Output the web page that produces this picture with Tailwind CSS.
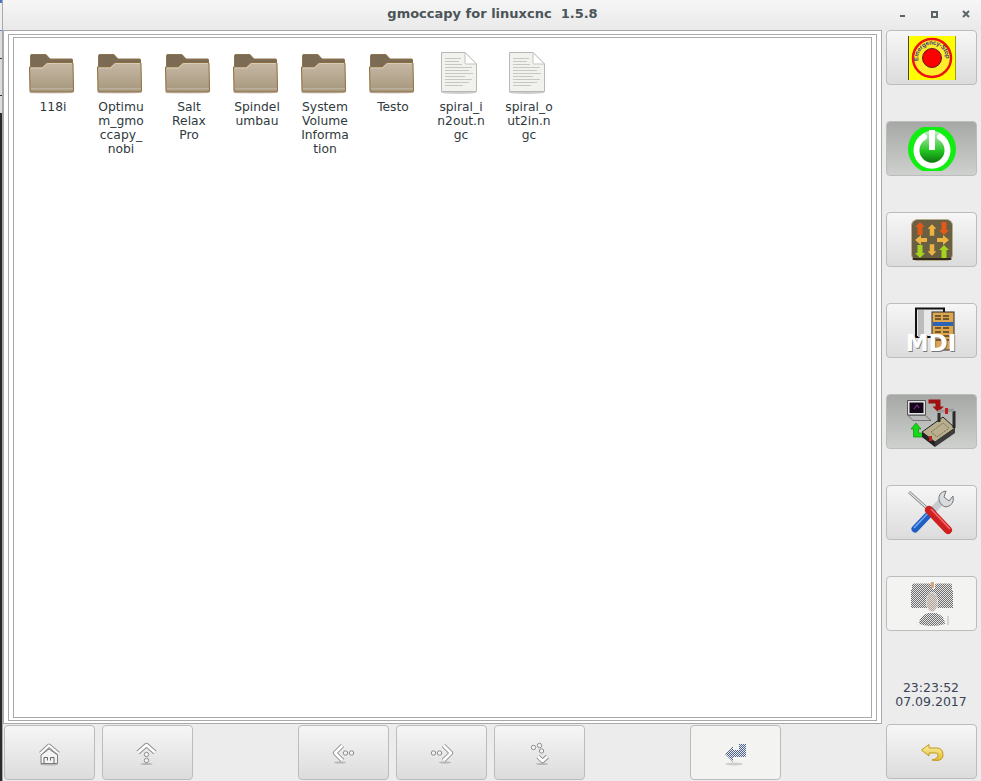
<!DOCTYPE html>
<html>
<head>
<meta charset="utf-8">
<script src="https://cdn.jsdelivr.net/npm/@tailwindcss/browser@4"></script>
</head>
<body class="m-0 overflow-hidden">
<svg class="absolute w-0 h-0">
  <defs>
    <linearGradient id="fr" x1="0" y1="0" x2="0" y2="1"><stop offset="0" stop-color="#c6b9a4"/><stop offset="1" stop-color="#a6967d"/></linearGradient>
    <linearGradient id="gold" x1="0" y1="0" x2="0" y2="1"><stop offset="0" stop-color="#fbf3a8"/><stop offset="1" stop-color="#e2b92a"/></linearGradient>
    <pattern id="chk" width="2" height="2" patternUnits="userSpaceOnUse"><rect width="2" height="2" fill="#e6e6e6"/><rect width="1" height="1" fill="#6e6e6e"/><rect x="1" y="1" width="1" height="1" fill="#6e6e6e"/></pattern>
    <pattern id="chkb" width="2" height="2" patternUnits="userSpaceOnUse"><rect width="2" height="2" fill="#e6e9ee"/><rect width="1" height="1" fill="#4f6388"/><rect x="1" y="1" width="1" height="1" fill="#4f6388"/></pattern>
    <pattern id="chkl" width="2" height="2" patternUnits="userSpaceOnUse"><rect width="2" height="2" fill="#e4dcd2"/><rect width="1" height="1" fill="#a9a39b"/><rect x="1" y="1" width="1" height="1" fill="#a9a39b"/></pattern>
    <symbol id="folder" viewBox="2 0 48 42">
      <ellipse cx="24" cy="39.500" rx="23" ry="1.500" fill="#000" opacity=".12"/>
      <path d="M3.500 2.500Q3.500 1.500 5 1.500H19L23 6H45Q45.500 6 45.500 7V20H3.500Z" fill="#7c6b54" stroke="#8a7350"/>
      <path d="M2.500 14H15L20 9.500H45Q46 9.500 46 11L46.500 38Q46.500 39 45 39H4Q3 39 3 38Z" fill="url(#fr)" stroke="#8e6d3c"/>
      <path d="M3.500 15H15.500L20.500 10.500H45" fill="none" stroke="#d8cdbb"/>
      <rect x="4" y="35" width="42" height="1.500" fill="#bdb09b"/>
    </symbol>
    <symbol id="doc" viewBox="2 0 40 44">
      <ellipse cx="19.500" cy="41.500" rx="18" ry="1.500" fill="#000" opacity=".2"/>
      <path d="M2.500 1.500H26L37.500 13V40.500H2.500Z" fill="#f1f1ee" stroke="#b8b8b4"/>
      <path d="M26 1.500V12Q26 13 27 13H37.500Z" fill="#fff" stroke="#c2c2be"/>
      <g stroke="#c6c6c2">
        <path d="M6 7.500H22M6 10.500H20M6 13.500H23M6 16.500H33M6 19.500H30M6 22.500H34M6 25.500H26M6 28.500H33M6 31.500H30M6 34.500H24"/>
      </g>
    </symbol>
    <symbol id="ar" viewBox="0 0 10 13"><path d="M5 0L10 5H7.500V13H2.500V5H0Z"/></symbol>
  </defs>
</svg>

<div class="w-[981px] h-[781px] flex bg-[#ececec] overflow-hidden font-['DejaVu_Sans',sans-serif]">
  <div class="w-[3px] h-full flex flex-col shrink-0 border-r border-[#a8a8a8]">
    <div class="h-[3px] bg-[#4a78c0]"></div>
    <div class="h-[27px] bg-[#efefef]"></div>
    <div class="h-[1px] bg-[#5a86c8]"></div>
    <div class="h-[27px] bg-[#dcdcdc]"></div>
    <div class="h-[1px] bg-[#333]"></div>
    <div class="h-[36px] bg-[#dcdcdc]"></div>
    <div class="h-[1px] bg-[#333]"></div>
    <div class="h-[17px] bg-[#dcdcdc]"></div>
    <div class="flex-1 bg-[#2a2a2a]"></div>
  </div>

  <div class="flex-1 flex flex-col min-w-0">
    <div class="h-[30px] shrink-0 bg-gradient-to-b from-[#f6f6f6] to-[#e9e9e9] relative flex items-center justify-center pl-[1px]">
      <span class="whitespace-pre text-[13px] font-bold text-[#4b5558] tracking-[0px] pb-[3px]">gmoccapy for linuxcnc  1.5.8</span>
      <div class="absolute right-0 top-0 h-[30px] w-[100px]">
        <svg class="absolute left-0 top-0" width="100" height="30" viewBox="0 0 100 30">
          <rect x="19" y="15" width="5" height="2" fill="#5b6567"/>
          <rect x="51" y="12" width="5" height="5" fill="none" stroke="#5b6567" stroke-width="2"/>
          <path d="M82 11L88 17M88 11L82 17" stroke="#5b6567" stroke-width="2"/>
        </svg>
      </div>
    </div>

    <div class="flex-1 flex min-h-0">
      <div class="w-[879px] shrink-0 flex flex-col">
        <div class="h-[694px] shrink-0 border border-[#a9a9a9] bg-white pt-[3px] pl-[4px] pr-[4px] pb-[2px]">
          <div class="h-full border border-[#a9a9a9] pt-[2px] pl-[4px] pr-[4px] pb-[2px]">
            <div class="h-full border border-[#a9a9a9] pl-[5px] pt-[15px] flex items-start text-[12.3px] leading-[14px] text-[#303a3d] text-center">
              <div class="w-[68px] flex flex-col items-center"><svg width="48" height="42"><use href="#folder"/></svg><div class="mt-[5px]">118i</div></div>
              <div class="w-[68px] flex flex-col items-center"><svg width="48" height="42"><use href="#folder"/></svg><div class="mt-[5px]">Optimu<br>m_gmo<br>ccapy_<br>nobi</div></div>
              <div class="w-[68px] flex flex-col items-center"><svg width="48" height="42"><use href="#folder"/></svg><div class="mt-[5px]">Salt<br>Relax<br>Pro</div></div>
              <div class="w-[68px] flex flex-col items-center"><svg width="48" height="42"><use href="#folder"/></svg><div class="mt-[5px]">Spindel<br>umbau</div></div>
              <div class="w-[68px] flex flex-col items-center"><svg width="48" height="42"><use href="#folder"/></svg><div class="mt-[5px]">System<br>Volume<br>Informa<br>tion</div></div>
              <div class="w-[68px] flex flex-col items-center"><svg width="48" height="42"><use href="#folder"/></svg><div class="mt-[5px]">Testo</div></div>
              <div class="w-[68px] flex flex-col items-center"><svg width="40" height="44" class="-mt-[2px]"><use href="#doc"/></svg><div class="mt-[5px]">spiral_i<br>n2out.n<br>gc</div></div>
              <div class="w-[68px] flex flex-col items-center"><svg width="40" height="44" class="-mt-[2px]"><use href="#doc"/></svg><div class="mt-[5px]">spiral_o<br>ut2in.n<br>gc</div></div>
            </div>
          </div>
        </div>

        <div class="flex pl-[1px] pt-[1px]">
          <div class="w-[91px] h-[55px] rounded-[4px] border border-[#bcbcbc] bg-gradient-to-b from-[#f6f6f6] to-[#dcdcdc] flex items-center justify-center">
            <svg width="32" height="32" viewBox="0 0 32 32">
              <ellipse cx="15" cy="27.500" rx="9" ry="1" fill="#000" opacity=".2"/>
              <path d="M6.500 16.500L15 8.500L24.500 16.500" fill="none" stroke="#8e8e8e" stroke-width="4" stroke-linejoin="round"/>
              <path d="M6.500 16.500L15 8.500L24.500 16.500" fill="none" stroke="#fff" stroke-width="2.200" stroke-linejoin="round"/>
              <path d="M7 18L15 12L23.500 18V26.500H7Z" fill="#f3f3f3" stroke="#7d7d7d"/>
              <path d="M10 26.500V20.500H13.500V23.500M16.500 23.500V20.500H20V26.500" fill="none" stroke="#666"/>
            </svg>
          </div>
          <div class="w-[91px] h-[55px] ml-[7px] rounded-[4px] border border-[#bcbcbc] bg-gradient-to-b from-[#f6f6f6] to-[#dcdcdc] flex items-center justify-center">
            <svg width="32" height="32" viewBox="0 0 32 32">
              <ellipse cx="14.500" cy="27" rx="6" ry="1" fill="#000" opacity=".2"/>
              <path d="M6 15.500L14.500 8L23 15.500" fill="none" stroke="#8e8e8e" stroke-width="4.500" stroke-linejoin="round"/>
              <path d="M6 15.500L14.500 8L23 15.500" fill="none" stroke="#fff" stroke-width="2.600" stroke-linejoin="round"/>
              <circle cx="14.500" cy="17.500" r="2.200" fill="#f4f4f4" stroke="#8c8c8c"/>
              <circle cx="14.500" cy="23.500" r="2.200" fill="#f4f4f4" stroke="#8c8c8c"/>
            </svg>
          </div>
          <div class="w-[91px] h-[55px] ml-[105px] rounded-[4px] border border-[#bcbcbc] bg-gradient-to-b from-[#f6f6f6] to-[#dcdcdc] flex items-center justify-center">
            <svg width="32" height="32" viewBox="0 0 32 32">
              <ellipse cx="12" cy="25.500" rx="6" ry="1" fill="#000" opacity=".2"/>
              <path d="M14.500 8.500L7 16L14.500 23.500" fill="none" stroke="#8e8e8e" stroke-width="4.500" stroke-linejoin="round"/>
              <path d="M14.500 8.500L7 16L14.500 23.500" fill="none" stroke="#fff" stroke-width="2.600" stroke-linejoin="round"/>
              <circle cx="17.500" cy="16" r="2.200" fill="#f4f4f4" stroke="#8c8c8c"/>
              <circle cx="23.500" cy="16" r="2.200" fill="#f4f4f4" stroke="#8c8c8c"/>
            </svg>
          </div>
          <div class="w-[91px] h-[55px] ml-[7px] rounded-[4px] border border-[#bcbcbc] bg-gradient-to-b from-[#f6f6f6] to-[#dcdcdc] flex items-center justify-center">
            <svg width="32" height="32" viewBox="0 0 32 32">
              <ellipse cx="19" cy="25.500" rx="6" ry="1" fill="#000" opacity=".2"/>
              <path d="M17.500 8.500L25 16L17.500 23.500" fill="none" stroke="#8e8e8e" stroke-width="4.500" stroke-linejoin="round"/>
              <path d="M17.500 8.500L25 16L17.500 23.500" fill="none" stroke="#fff" stroke-width="2.600" stroke-linejoin="round"/>
              <circle cx="7.500" cy="16" r="2.200" fill="#f4f4f4" stroke="#8c8c8c"/>
              <circle cx="13.500" cy="16" r="2.200" fill="#f4f4f4" stroke="#8c8c8c"/>
            </svg>
          </div>
          <div class="w-[91px] h-[55px] ml-[7px] rounded-[4px] border border-[#bcbcbc] bg-gradient-to-b from-[#f6f6f6] to-[#dcdcdc] flex items-center justify-center">
            <svg width="32" height="32" viewBox="0 0 32 32">
              <ellipse cx="18" cy="27" rx="6" ry="1" fill="#000" opacity=".2"/>
              <path d="M14 19.500L18.500 24L23.500 19.500" fill="none" stroke="#8e8e8e" stroke-width="4.500" stroke-linejoin="round"/>
              <path d="M14 19.500L18.500 24L23.500 19.500" fill="none" stroke="#fff" stroke-width="2.600" stroke-linejoin="round"/>
              <circle cx="9.500" cy="10.500" r="2.200" fill="#f4f4f4" stroke="#8c8c8c"/>
              <circle cx="15.500" cy="8.500" r="2.200" fill="#f4f4f4" stroke="#8c8c8c"/>
              <circle cx="17.500" cy="14" r="2.200" fill="#f4f4f4" stroke="#8c8c8c"/>
            </svg>
          </div>
          <div class="w-[91px] h-[55px] ml-[105px] rounded-[4px] border border-[#bcbcbc] bg-[#f3f3f1] flex items-center justify-center">
            <svg width="32" height="32" viewBox="0 0 32 32">
              <ellipse cx="14" cy="27" rx="9" ry="1.500" fill="#000" opacity=".15"/>
              <path d="M5 17L13 9.500V13H19V7H26V19Q26 20 25 20H13V25Z" fill="url(#chkb)"/>
            </svg>
          </div>
        </div>
      </div>

      <div class="flex-1 pl-[4px] flex flex-col">
        <div class="w-[91px] h-[55px] shrink-0 rounded-[4px] border border-[#bcbcbc] bg-gradient-to-b from-[#f6f6f6] to-[#dcdcdc] flex items-center justify-center">
          <svg width="48" height="44" viewBox="0 0 48 44">
            <rect width="48" height="44" fill="#ffff00"/>
            <rect width="1" height="44" fill="#444"/>
            <rect x="47" width="1" height="44" fill="#9a9a30"/>
            <circle cx="24" cy="22" r="19" fill="#ffec2a" stroke="#ee1111" stroke-width="2.500"/>
            <circle cx="24" cy="22" r="9.500" fill="#ff0000" stroke="#552222"/>
            <path id="esarc" d="M10.500 25A13.800 13.800 0 1 1 37.500 25.500" fill="none"/>
            <text font-size="6.200" font-weight="bold" fill="#35357a" font-family="Liberation Sans"><textPath href="#esarc" textLength="46">Emergency-Stop</textPath></text>
          </svg>
        </div>
        <div class="w-[91px] h-[55px] mt-[36px] shrink-0 rounded-[4px] border border-[#bcbcbc] bg-gradient-to-b from-[#a6a8a6] to-[#cfd1cf] flex items-center justify-center">
          <svg width="48" height="44" viewBox="0 0 48 44">
            <defs><clipPath id="pc"><rect width="48" height="44"/></clipPath>
            <linearGradient id="pg" x1="0" y1="0" x2="0" y2="1"><stop offset="0" stop-color="#c8f0c8"/><stop offset=".55" stop-color="#22c522"/><stop offset="1" stop-color="#085a08"/></linearGradient></defs>
            <g clip-path="url(#pc)">
              <circle cx="24" cy="22" r="24" fill="#11ee11"/>
              <circle cx="24" cy="22" r="18" fill="url(#pg)"/>
              <path d="M16 10A15.500 15.500 0 1 0 32 10" fill="none" stroke="#fff" stroke-width="6" stroke-linecap="round"/>
              <rect x="21" y="3" width="6" height="20" fill="#fff"/>
            </g>
          </svg>
        </div>
        <div class="w-[91px] h-[55px] mt-[36px] shrink-0 rounded-[4px] border border-[#bcbcbc] bg-gradient-to-b from-[#f6f6f6] to-[#dcdcdc] flex items-center justify-center">
          <svg width="42" height="42" viewBox="0 0 42 42">
            <rect x=".5" y=".5" width="41" height="41" rx="6" fill="#6a5f42" stroke="#b8ad88"/>
            <rect x="1.500" y="39" width="39" height="2" rx="1" fill="#2f2a1c"/>
            <g fill="#e0591a"><use href="#ar" x="4" y="3" width="10" height="13"/></g>
            <g fill="#ecb342"><use href="#ar" x="16.500" y="5" width="9" height="12"/></g>
            <g fill="#e0591a" transform="rotate(180 33 9.500)"><use href="#ar" x="28" y="3" width="10" height="13"/></g>
            <g fill="#ecb342"><path d="M4 21L10 16V19H16V23H10V26Z"/></g>
            <g fill="#ecb342"><path d="M38 21L32 16V19H26V23H32V26Z"/></g>
            <g fill="#a5d41f" transform="rotate(180 9 32.500)"><use href="#ar" x="4" y="26" width="10" height="13"/></g>
            <g fill="#ecb342" transform="rotate(180 21 31)"><use href="#ar" x="16.500" y="25" width="9" height="12"/></g>
            <g fill="#a5d41f"><use href="#ar" x="28" y="26" width="10" height="13"/></g>
          </svg>
        </div>
        <div class="w-[91px] h-[55px] mt-[36px] shrink-0 rounded-[4px] border border-[#bcbcbc] bg-gradient-to-b from-[#f6f6f6] to-[#dcdcdc] relative flex items-center justify-center">
          <svg width="48" height="48" viewBox="0 0 48 48" class="overflow-visible">
            <path d="M8 1.500H36V30H8Z" fill="#e8e8e8" stroke="#111" stroke-width="2"/>
            <rect x="10" y="3" width="6" height="27" fill="#bcbcbc"/>
            <rect x="24" y="5" width="22" height="38" fill="#dfa651" stroke="#2b2b2b"/>
            <path d="M27 9H43M27 12H43M27 21H43M27 25H43M27 29H43M27 33H43" stroke="#4f3f22" stroke-width="1.500" stroke-dasharray="6 2"/>
            <rect x="25" y="15" width="20" height="4" fill="#2a64b8"/>
            <text x="23.800" y="44.800" text-anchor="middle" font-size="23" font-weight="bold" fill="#777" font-family="DejaVu Sans">MDI</text>
            <text x="23" y="44" text-anchor="middle" font-size="23" font-weight="bold" fill="#fff" font-family="DejaVu Sans">MDI</text>
          </svg>
        </div>
        <div class="w-[91px] h-[55px] mt-[36px] shrink-0 rounded-[4px] border border-[#bcbcbc] bg-gradient-to-b from-[#a6a8a6] to-[#cfd1cf] flex items-center justify-center">
          <svg width="50" height="50" viewBox="0 0 50 50">
            <path d="M.5 3.500H18.500V18H.5Z" fill="#e4e4e4" stroke="#555"/>
            <rect x="2.500" y="5.500" width="14" height="10.500" fill="#140818"/>
            <path d="M7 12L10 8L12 11" stroke="#a030b0" fill="none"/>
            <path d="M1 18.500H18.500L24 23.500H6Z" fill="#b8b8b8" stroke="#444" stroke-width=".6"/>
            <path d="M21.500 2.500H33.500V9.500H37L31 15L25.500 9.500H28.500V6.500H21.500Z" fill="#a01010"/>
            <path d="M9 26L14 32H11.500V36H17V40H6.500V32H4Z" fill="#14dc14" stroke="#0a7a0a" stroke-width=".6"/>
            <path d="M15 35L36 20L48 31L28 45Z" fill="#b9ae8d" stroke="#222"/>
            <path d="M15 35V40L28 50V45Z" fill="#222"/>
            <path d="M28 45V50L48 36V31Z" fill="#3c3c3c"/>
            <path d="M32 16V25M47 14V31" stroke="#2a2a2a" stroke-width="3"/>
            <path d="M31 14.500L47 13" stroke="#9a9a9a" stroke-width="3"/>
            <rect x="38" y="11" width="3" height="6" fill="#c02020"/>
            <rect x="22" y="39" width="3" height="5" fill="#c02020"/>
            <path d="M24 35L36 26L42 31L30 40Z" fill="none" stroke="#7a7058" stroke-dasharray="2 1"/>
          </svg>
        </div>
        <div class="w-[91px] h-[55px] mt-[36px] shrink-0 rounded-[4px] border border-[#bcbcbc] bg-gradient-to-b from-[#f6f6f6] to-[#dcdcdc] flex items-center justify-center">
          <svg width="48" height="50" viewBox="0 0 48 50">
            <path d="M1 4L20 21" stroke="#7c7c7c" stroke-width="3"/>
            <path d="M1 4L20 21" stroke="#e4e4e4" stroke-width="1.500"/>
            <path d="M25 22L7 41" stroke="#1f5fc4" stroke-width="7" stroke-linecap="round"/>
            <path d="M23 22L6 40" stroke="#7aa8ee" stroke-width="1.500"/>
            <path d="M35 12L26 21" stroke="#c8ccce" stroke-width="7"/>
            <path d="M31 12Q30 4 38 3L36 9L41 13L45 8Q47 17 38 19Q33 18 31 12Z" fill="#d8dcde" stroke="#777"/>
            <path d="M21 22L40 42" stroke="#d01f1f" stroke-width="8" stroke-linecap="round"/>
            <path d="M23 21L42 41" stroke="#f07070" stroke-width="1.500"/>
          </svg>
        </div>
        <div class="w-[91px] h-[55px] mt-[36px] shrink-0 rounded-[4px] border border-[#bcbcbc] bg-[#f3f3f1] flex items-center justify-center">
          <svg width="44" height="46" viewBox="0 0 44 46">
            <path d="M2 4Q2 2.500 4 2.500H20Q22 2.500 22 4V8H25V4Q25 2.500 27 2.500H40Q42 2.500 42 4V9H43V27H1V9H2Z" fill="url(#chk)"/>
            <rect x="21" y="1" width="3" height="6" fill="#d8a878"/>
            <ellipse cx="22" cy="21" rx="6" ry="10" fill="#f3f3f1"/>
            <ellipse cx="22" cy="21" rx="5.500" ry="9.500" fill="url(#chkl)"/>
            <path d="M9 43Q9 35 18 32H26Q35 35 35 43Q22 47 9 43Z" fill="url(#chk)"/>
            <rect x="37" y="35" width="2" height="9" fill="#d4d4d0"/>
          </svg>
        </div>
        <div class="mt-[50px] w-[91px] pr-[1px] text-center text-[12.500px] leading-[14px] text-[#3a4356]">23:23:52<br>07.09.2017</div>
        <div class="w-[91px] h-[55px] mt-[15px] shrink-0 rounded-[4px] border border-[#bcbcbc] bg-gradient-to-b from-[#f6f6f6] to-[#dcdcdc] flex items-center justify-center">
          <svg width="32" height="32" viewBox="0 0 32 32">
            <path d="M5.500 14L13 8.500V12H21Q27 12 27 19Q27 24 21 24.500L16 24Q22 23 22 19Q22 17 20 17H13V20Z" fill="url(#gold)" stroke="#c39a1a" stroke-linejoin="round"/>
          </svg>
        </div>
      </div>
    </div>
  </div>
</div>
</body>
</html>
